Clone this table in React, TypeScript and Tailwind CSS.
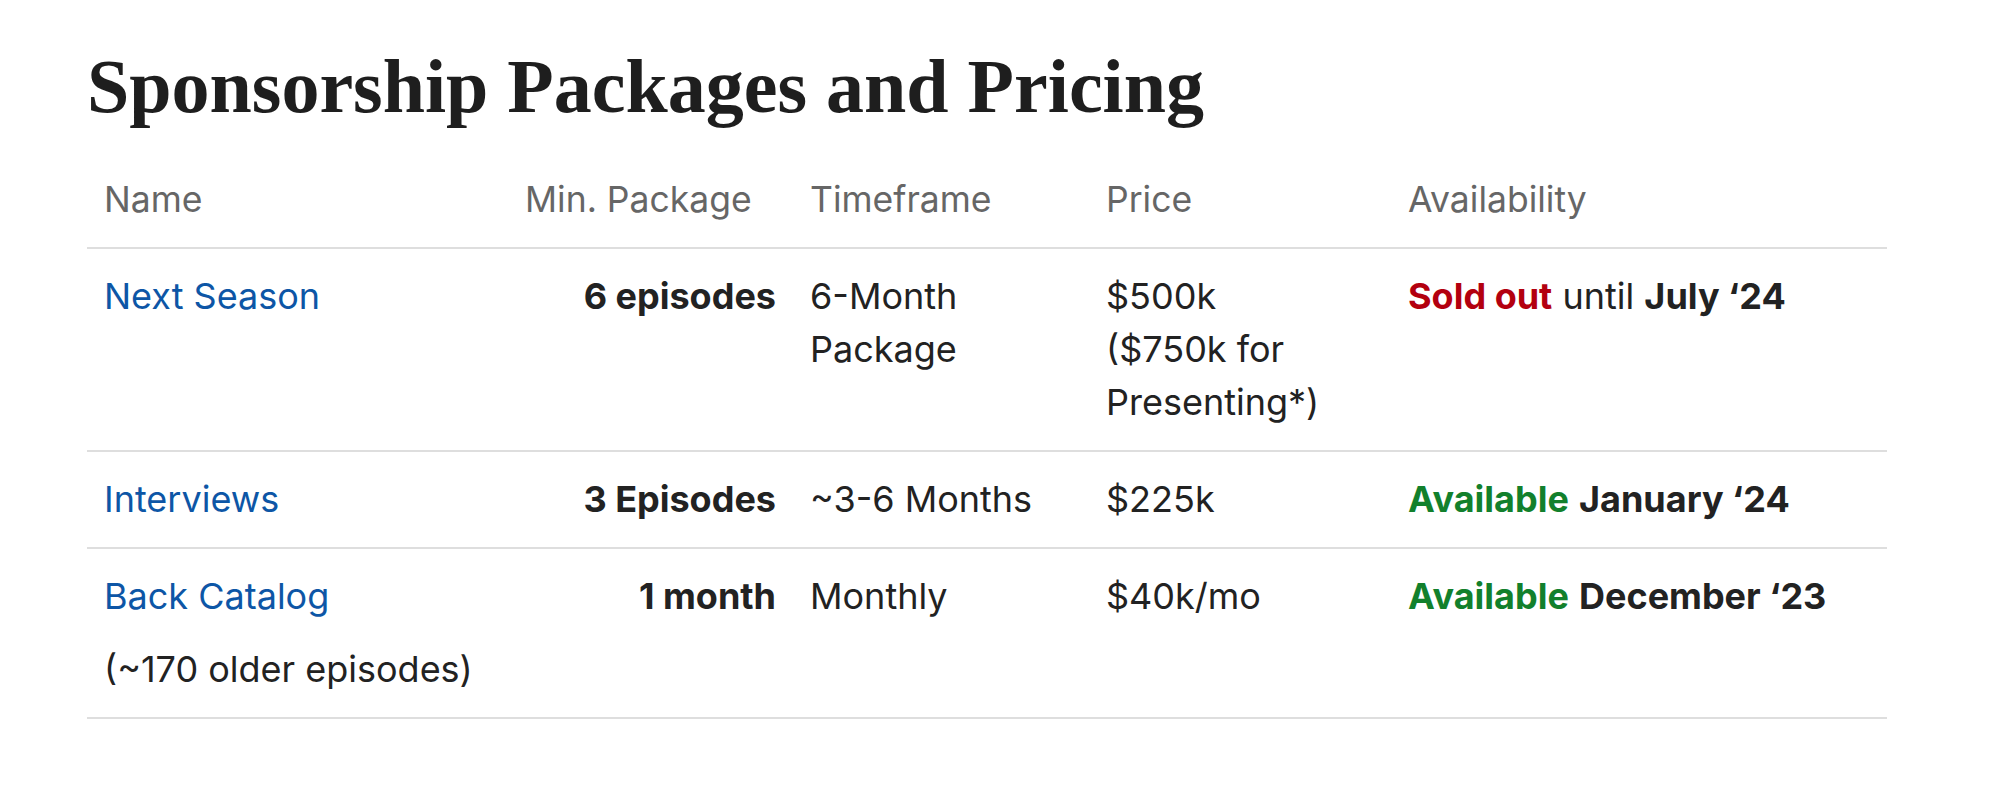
import React from "react";

const rows = [
  {
    name: "Next Season",
    note: null,
    min: "6 episodes",
    timeframe: (
      <>
        6-Month
        <br />
        Package
      </>
    ),
    price: (
      <>
        $500k
        <br />
        ($750k for Presenting*)
      </>
    ),
    status: "Sold out",
    statusColor: "text-[#b3000f]",
    rest: (
      <>
        {" "}until <b className="font-bold">July ‘24</b>
      </>
    ),
  },
  {
    name: "Interviews",
    note: null,
    min: "3 Episodes",
    timeframe: "~3-6 Months",
    price: "$225k",
    status: "Available",
    statusColor: "text-[#12802c]",
    rest: (
      <>
        {" "}<b className="font-bold">January ‘24</b>
      </>
    ),
  },
  {
    name: "Back Catalog",
    note: "(~170 older episodes)",
    min: "1 month",
    timeframe: "Monthly",
    price: "$40k/mo",
    status: "Available",
    statusColor: "text-[#12802c]",
    rest: (
      <>
        {" "}<b className="font-bold">December ‘23</b>
      </>
    ),
  },
];

export default function App() {
  return (
    <div className="min-h-screen bg-white pl-[87px] pt-[41px] text-[#222]">
      <h1 className="font-['Liberation_Serif',serif] text-[76px] font-bold leading-[91px] text-[#1e1e1e]">
        Sponsorship Packages and Pricing
      </h1>

      <table className="mt-[20px] w-[1800px] table-fixed border-collapse font-['Inter',sans-serif] text-[36px] leading-[53px]">
        <colgroup>
          <col className="w-[421px]" />
          <col className="w-[285px]" />
          <col className="w-[296px]" />
          <col className="w-[302px]" />
          <col className="w-[496px]" />
        </colgroup>
        <thead>
          <tr className="border-b-2 border-[#dedede] text-left text-[35.5px] text-[#666]">
            <th className="px-[17px] py-[21px] font-normal">Name</th>
            <th className="px-[17px] py-[21px] font-normal whitespace-nowrap">Min. Package</th>
            <th className="px-[17px] py-[21px] font-normal">Timeframe</th>
            <th className="px-[17px] py-[21px] font-normal">Price</th>
            <th className="px-[17px] py-[21px] font-normal">Availability</th>
          </tr>
        </thead>
        <tbody>
          {rows.map((r) => (
            <tr key={r.name} className="border-b-2 border-[#dedede] align-top">
              <td className="px-[17px] py-[21px]">
                <a href="#" className="text-[#0d56a6]">
                  {r.name}
                </a>
                {r.note && <p className="mt-[20px]">{r.note}</p>}
              </td>
              <td className="px-[17px] py-[21px] text-right font-bold whitespace-nowrap">{r.min}</td>
              <td className="px-[17px] py-[21px]">{r.timeframe}</td>
              <td className="px-[17px] py-[21px]">{r.price}</td>
              <td className="px-[17px] py-[21px] whitespace-nowrap">
                <b className={`font-bold ${r.statusColor}`}>{r.status}</b>
                {r.rest}
              </td>
            </tr>
          ))}
        </tbody>
      </table>
    </div>
  );
}
